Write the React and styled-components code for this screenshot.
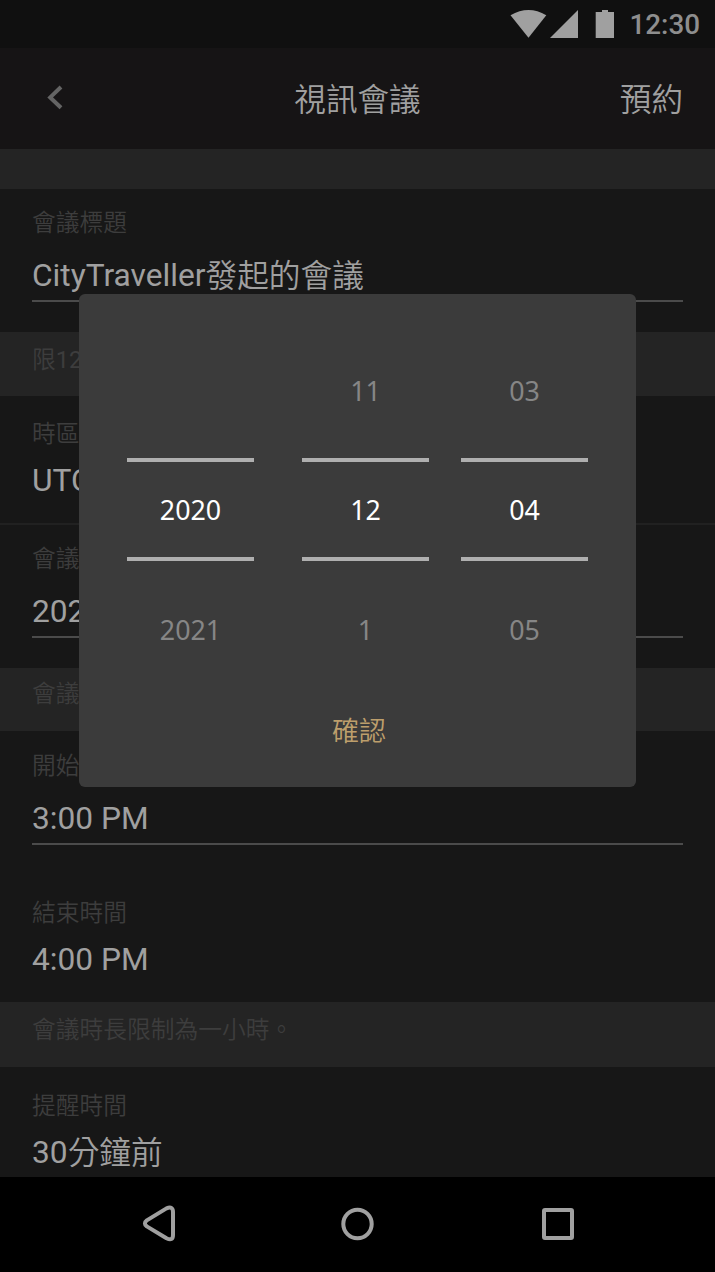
import React from "react";
import styled, { createGlobalStyle } from "styled-components";

const GlobalStyle = createGlobalStyle`
  * { box-sizing: border-box; }
  body { margin: 0; background: #000; }
`;

const Screen = styled.div`
  position: relative;
  width: 715px;
  height: 1272px;
  overflow: hidden;
  display: flex;
  flex-direction: column;
  background: #171717;
  color: #a0a0a0;
  font-family: Roboto, "Noto Sans CJK TC", sans-serif;
`;

const StatusBar = styled.div`
  height: 48px;
  flex: none;
  display: flex;
  justify-content: flex-end;
  align-items: center;
  padding-right: 15px;
  background: #101010;
`;

const StatusIcons = styled.svg`
  display: block;
  width: 106px;
  height: 48px;
  margin-right: 14px;
`;

const Clock = styled.span`
  margin-top: 2px;
  font-size: 27.8px;
  font-weight: 500;
  line-height: 48px;
  color: #8e8e8e;
`;

const Header = styled.header`
  height: 101px;
  flex: none;
  display: grid;
  grid-template-columns: 1fr auto 1fr;
  align-items: center;
  padding: 0 32px;
  background: #161415;
  font-size: 31.6px;
  font-weight: 350;
  line-height: 44px;
`;

const BackIcon = styled.svg`
  display: block;
  width: 48px;
  height: 48px;
  margin-top: -4px;
`;

const Title = styled.div`
  margin-top: 4px;
`;

const Action = styled.div`
  margin-top: 4px;
  text-align: right;
`;

const Band = styled.div`
  flex: none;
  height: ${(p) => p.$height}px;
  padding: ${(p) => p.$top || 0}px 32px 0;
  background: #242424;
`;

const Section = styled.section`
  flex: none;
  height: ${(p) => p.$height}px;
  padding: ${(p) => p.$top}px 32px 0;
`;

const Divider = styled.div`
  flex: none;
  height: 2px;
  background: #212121;
`;

const Label = styled.div`
  font-size: 23.75px;
  font-weight: 350;
  line-height: 34px;
  height: 32px;
  white-space: nowrap;
  color: #3d3d3d;
`;

const Digits = styled.span`
  font-weight: 400;
`;

const Value = styled.div`
  margin-top: ${(p) => p.$gap}px;
  font-size: 31.7px;
  font-weight: 400;
  line-height: 42px;
  height: 40px;
  white-space: nowrap;
`;

const Cjk = styled.span`
  font-weight: 350;
  line-height: 1;
  vertical-align: -1px;
`;

const Underline = styled.div`
  height: 2px;
  margin-top: 5px;
  background: #4b4b4b;
`;

const NavBar = styled.nav`
  flex: none;
  height: 95px;
  background: #000;
`;

const NavIcons = styled.svg`
  display: block;
  width: 715px;
  height: 95px;
`;

const Overlay = styled.div`
  position: absolute;
  inset: 0;
  display: flex;
  justify-content: center;
  align-items: flex-start;
  padding-top: 294px;
`;

const Dialog = styled.div`
  width: 557px;
  height: 493px;
  border-radius: 6px;
  background: #3b3b3b;
  font-family: "Noto Sans", "Noto Sans CJK TC", sans-serif;
  font-size: 26.8px;
  text-align: center;
`;

const Wheels = styled.div`
  display: flex;
  padding: 72px 0 0 48px;
`;

const Wheel = styled.div`
  width: 127px;
  margin-right: ${(p) => p.$space}px;
`;

const Option = styled.div`
  height: 50px;
  line-height: 50px;
  color: #868686;
`;

const Selected = styled.div`
  height: 103px;
  margin: 42px 0 44px;
  border: solid #afafaf;
  border-width: 4px 0;
  line-height: 96px;
  color: #fff;
`;

const Confirm = styled.div`
  margin: 54px 0 0 3px;
  font-family: "Noto Sans CJK TC", sans-serif;
  font-size: 27px;
  font-weight: 350;
  line-height: 42px;
  color: #bd9f6c;
`;

const wheels = [
  { before: "", value: "2020", after: "2021", space: 48 },
  { before: "11", value: "12", after: "1", space: 32 },
  { before: "03", value: "04", after: "05", space: 0 },
];

export default function App() {
  return (
    <Screen>
      <GlobalStyle />
      <StatusBar>
        <StatusIcons viewBox="509 0 106 48" fill="#a0a0a0">
          <path d="M510.5 15.2Q528.5 4.8 546.3 15.2L528.5 37.7Z" />
          <path d="M550 38L578 10V38Z" />
          <path d="M595.7 12H602V10H608V12H614V38H595.7Z" />
        </StatusIcons>
        <Clock>12:30</Clock>
      </StatusBar>
      <Header>
        <BackIcon viewBox="32 73 48 48" fill="none" stroke="#646464" strokeWidth="4">
          <path d="M61 87L50.2 97.4L61 107.8" />
        </BackIcon>
        <Title>視訊會議</Title>
        <Action>預約</Action>
      </Header>
      <Band $height={40} />
      <Section $height={143} $top={17}>
        <Label>會議標題</Label>
        <Value $gap={17}>CityTraveller<Cjk>發起的會議</Cjk></Value>
        <Underline />
      </Section>
      <Band $height={64} $top={11}>
        <Label>限<Digits>12</Digits>人</Label>
      </Band>
      <Section $height={127} $top={21}>
        <Label>時區</Label>
        <Value $gap={11}>UTC</Value>
      </Section>
      <Divider />
      <Section $height={143} $top={17}>
        <Label>會議日期</Label>
        <Value $gap={17}>2020</Value>
        <Underline />
      </Section>
      <Band $height={63} $top={9}>
        <Label>會議日期</Label>
      </Band>
      <Section $height={114} $top={18}>
        <Label>開始時間</Label>
        <Value $gap={17}>3:00 PM</Value>
        <Underline />
      </Section>
      <Section $height={157} $top={51}>
        <Label>結束時間</Label>
        <Value $gap={11}>4:00 PM</Value>
      </Section>
      <Band $height={65} $top={11}>
        <Label>會議時長限制為一小時。</Label>
      </Band>
      <Section $height={110} $top={22}>
        <Label>提醒時間</Label>
        <Value $gap={11}>30<Cjk>分鐘前</Cjk></Value>
      </Section>
      <NavBar>
        <NavIcons viewBox="0 1177 715 95" fill="none" stroke="#a0a0a0" strokeWidth="4" strokeLinejoin="round">
          <path d="M146.8 1220.4L166.5 1208.4Q173 1205.6 173 1212V1235Q173 1241.4 166.5 1238.2L146.8 1226.4Q143 1223.4 146.8 1220.4Z" />
          <circle cx="357.5" cy="1224" r="14.2" />
          <rect x="544" y="1210" width="28" height="28" rx="1" />
        </NavIcons>
      </NavBar>
      <Overlay>
        <Dialog>
          <Wheels>
            {wheels.map((w) => (
              <Wheel key={w.value} $space={w.space}>
                <Option>{w.before}</Option>
                <Selected>{w.value}</Selected>
                <Option>{w.after}</Option>
              </Wheel>
            ))}
          </Wheels>
          <Confirm>確認</Confirm>
        </Dialog>
      </Overlay>
    </Screen>
  );
}
